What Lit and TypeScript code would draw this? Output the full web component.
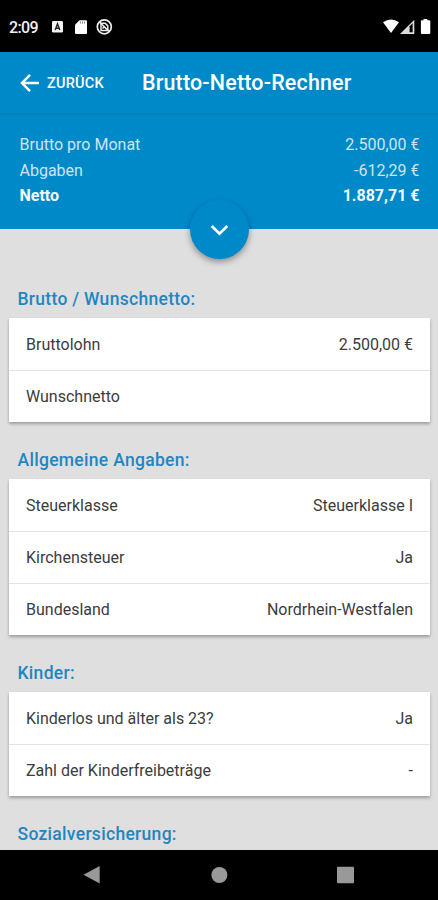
import { LitElement, html, css } from "lit";
import { customElement, property } from "lit/decorators.js";

interface Entry {
  label: string;
  value: string;
}

@customElement("status-bar")
class StatusBar extends LitElement {
  static styles = css`
    :host {
      display: flex;
      justify-content: space-between;
      height: 52px;
      background: #000;
      color: #f0f0f0;
    }
    svg { display: block; }
    .left { display: flex; padding-left: 9px; }
    .time {
      width: 41px;
      padding-top: 18px;
      font-size: 16px;
      line-height: 20px;
      font-weight: 500;
      letter-spacing: -0.6px;
    }
  `;

  render() {
    return html`
      <div class="left">
        <div class="time">2:09</div>
        <svg width="66" height="52" viewBox="50 0 66 52">
          <rect x="52" y="21" width="11" height="11.5" rx="1.2" fill="#f4f4f4" />
          <path d="M55.2 30 57.5 23.8 59.8 30M56 28.2h3" fill="none" stroke="#222" stroke-width="1.4" />
          <path d="M79.5 20.2H86a1 1 0 0 1 1 1V33a1 1 0 0 1-1 1H76a1 1 0 0 1-1-1v-8.3z" fill="#fff" />
          <path d="M80.4 21.4v2.2M82.5 21.4v2.2M84.6 21.4v2.2" stroke="#777" stroke-width=".9" />
          <circle cx="104.3" cy="26.8" r="7" fill="none" stroke="#eee" stroke-width="1.7" />
          <path d="M101 23.3h4.2l2.6 2.6v4.6h-6.8z" fill="none" stroke="#eee" stroke-width="1.5" />
          <path d="M99.7 22.2l9.2 9.2M102.5 28.5l2-2" stroke="#eee" stroke-width="1.5" />
        </svg>
      </div>
      <svg width="58" height="52" viewBox="380 0 58 52">
        <path d="M383 22.3Q391 16.8 399 22.3L391 33z" fill="#fff" />
        <path d="M400 34 414.3 19.8V34z" fill="#ddd" />
        <path d="M409.6 26.2 412.6 23.2V32.3H409.6z" fill="#000" />
        <path d="M423.5 20.2V19h3.8v1.2h2a1 1 0 0 1 1 1V33a1 1 0 0 1-1 1h-7.4a1 1 0 0 1-1-1V21.2a1 1 0 0 1 1-1z" fill="#fff" />
      </svg>
    `;
  }
}

@customElement("title-bar")
class TitleBar extends LitElement {
  static styles = css`
    :host {
      display: flex;
      box-sizing: border-box;
      height: 63px;
      padding-left: 20px;
      border-bottom: 2px solid #007fbc;
      background: #0089c9;
      color: #fff;
    }
    svg { display: block; margin-top: 20px; }
    .back {
      width: 95px;
      padding: 22px 0 0 7px;
      font-size: 14.5px;
      line-height: 20px;
      font-weight: 500;
      letter-spacing: 0.25px;
    }
    .title {
      padding-top: 18px;
      font-size: 21.5px;
      line-height: 26px;
      font-weight: 500;
      letter-spacing: 0.16px;
      white-space: nowrap;
    }
  `;

  render() {
    return html`
      <svg width="20" height="22" viewBox="0 0 20 22">
        <path d="M19 11H2.5M10 2.8 2 11l8 8.2" fill="none" stroke="#fff" stroke-width="2.5" />
      </svg>
      <div class="back">ZURÜCK</div>
      <div class="title">Brutto-Netto-Rechner</div>
    `;
  }
}

@customElement("result-summary")
class ResultSummary extends LitElement {
  static styles = css`
    :host {
      display: block;
      position: relative;
      box-sizing: border-box;
      height: 114px;
      padding: 17px 18.5px 0 19.5px;
      background: #0089c9;
      color: #cde5f3;
    }
    .line {
      display: flex;
      justify-content: space-between;
      height: 25.5px;
      font-size: 16px;
      line-height: 25.5px;
    }
    .line.total { font-weight: 700; color: #f2f9fd; }
    .toggle {
      position: absolute;
      left: 190px;
      top: 85px;
      width: 59px;
      height: 59px;
      border-radius: 50%;
      background: #0089c9;
      box-shadow: 0 3px 6px rgba(0, 0, 0, 0.36);
    }
    svg { display: block; }
  `;

  render() {
    return html`
      <div class="line"><span>Brutto pro Monat</span><span>2.500,00 €</span></div>
      <div class="line"><span>Abgaben</span><span>-612,29 €</span></div>
      <div class="line total"><span>Netto</span><span>1.887,71 €</span></div>
      <div class="toggle">
        <svg width="59" height="59" viewBox="0 0 59 59">
          <path d="M21.7 26 29.5 33.6 37.3 26" fill="none" stroke="#fff" stroke-width="2.7" />
        </svg>
      </div>
    `;
  }
}

@customElement("form-section")
class FormSection extends LitElement {
  @property() heading = "";
  @property({ attribute: false }) entries: Entry[] = [];

  static styles = css`
    :host { display: block; }
    .heading {
      height: 32px;
      padding-left: 17.5px;
      font-size: 17.5px;
      line-height: 26px;
      font-weight: 500;
      letter-spacing: 0.3px;
      color: #1f86c2;
    }
    .card {
      margin: 0 8px 0 9px;
      background: #fff;
      box-shadow: 0 2px 3px rgba(0, 0, 0, 0.3);
    }
    .row {
      display: flex;
      justify-content: space-between;
      box-sizing: border-box;
      height: 52px;
      padding: 0 17px;
      font-size: 16px;
      line-height: 54px;
      color: #3c3c3c;
    }
    .row + .row { border-top: 1px solid #e4e4e4; line-height: 51px; }
  `;

  render() {
    return html`
      <div class="heading">${this.heading}</div>
      ${this.entries.length
        ? html`<div class="card">
            ${this.entries.map(
              (e) => html`<div class="row"><span>${e.label}</span><span>${e.value}</span></div>`
            )}
          </div>`
        : ""}
    `;
  }
}

@customElement("nav-bar")
class NavBar extends LitElement {
  static styles = css`
    :host {
      display: flex;
      height: 50.5px;
      background: #000;
    }
    svg { display: block; }
  `;

  render() {
    return html`
      <svg width="438" height="50" viewBox="0 0 438 50">
        <path d="M83.5 24.7 99.7 16v17.5z" fill="#999" />
        <circle cx="219.4" cy="25" r="8" fill="#999" />
        <rect x="337" y="16.7" width="17" height="16.5" rx="1" fill="#999" />
      </svg>
    `;
  }
}

@customElement("app-root")
class AppRoot extends LitElement {
  static styles = css`
    :host {
      display: flex;
      flex-direction: column;
      width: 438px;
      height: 900px;
      overflow: hidden;
      background: #dfdfdf;
      font-family: Roboto, "Liberation Sans", sans-serif;
    }
    status-bar, title-bar, result-summary, nav-bar { flex: none; }
    .content {
      flex: 1;
      min-height: 0;
      overflow: hidden;
      display: flex;
      flex-direction: column;
      gap: 25px;
      padding-top: 57px;
    }
    result-summary { z-index: 1; }
  `;

  render() {
    return html`
      <status-bar></status-bar>
      <title-bar></title-bar>
      <result-summary></result-summary>
      <div class="content">
        <form-section
          heading="Brutto / Wunschnetto:"
          .entries=${[
            { label: "Bruttolohn", value: "2.500,00 €" },
            { label: "Wunschnetto", value: "" },
          ]}
        ></form-section>
        <form-section
          heading="Allgemeine Angaben:"
          .entries=${[
            { label: "Steuerklasse", value: "Steuerklasse I" },
            { label: "Kirchensteuer", value: "Ja" },
            { label: "Bundesland", value: "Nordrhein-Westfalen" },
          ]}
        ></form-section>
        <form-section
          heading="Kinder:"
          .entries=${[
            { label: "Kinderlos und älter als 23?", value: "Ja" },
            { label: "Zahl der Kinderfreibeträge", value: "-" },
          ]}
        ></form-section>
        <form-section heading="Sozialversicherung:"></form-section>
      </div>
      <nav-bar></nav-bar>
    `;
  }
}
